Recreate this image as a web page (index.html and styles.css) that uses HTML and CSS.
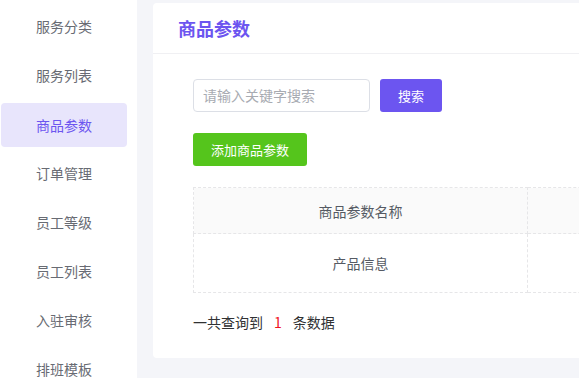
FILE: index.html
```html
<!DOCTYPE html>
<html lang="zh">
<head>
<meta charset="utf-8">
<link rel="stylesheet" href="styles.css">
</head>
<body>
<div class="layout">
  <aside class="sidebar">
    <div class="nav-item">服务分类</div>
    <div class="nav-item">服务列表</div>
    <div class="nav-item active">商品参数</div>
    <div class="nav-item">订单管理</div>
    <div class="nav-item">员工等级</div>
    <div class="nav-item">员工列表</div>
    <div class="nav-item">入驻审核</div>
    <div class="nav-item">排班模板</div>
  </aside>
  <main class="main">
    <section class="card">
      <header class="card-header">商品参数</header>
      <div class="card-body">
        <div class="search-row">
          <div class="search-input">请输入关键字搜索</div>
          <button class="btn btn-primary">搜索</button>
        </div>
        <button class="btn btn-success">添加商品参数</button>
        <table class="table">
          <thead>
            <tr><th class="col-name">商品参数名称</th><th></th></tr>
          </thead>
          <tbody>
            <tr><td>产品信息</td><td></td></tr>
          </tbody>
        </table>
        <div class="summary">一共查询到<span class="count">1</span>条数据</div>
      </div>
    </section>
  </main>
</div>
</body>
</html>
```

FILE: styles.css
```css
* { box-sizing: border-box; }
html, body {
  margin: 0;
  padding: 0;
  width: 579px;
  height: 378px;
  overflow: hidden;
  font-family: "Noto Sans CJK SC", "Noto Sans", sans-serif;
  font-size: 14px;
}
.layout {
  display: flex;
  height: 378px;
}
.sidebar {
  width: 137px;
  flex: none;
  background: #fff;
  padding-top: 4px;
  display: flex;
  flex-direction: column;
  gap: 5px;
}
.nav-item {
  margin-left: 1px;
  width: 126px;
  height: 44px;
  line-height: 44px;
  padding-left: 35px;
  color: #686b73;
  border-radius: 4px;
  flex: none;
}
.nav-item.active {
  margin-top: 1px;
  margin-bottom: -1px;
  background: #e8e5fc;
  color: #6c55f0;
}
.main {
  flex: 1;
  background: #f4f5f9;
  padding: 3px 0 0 16px;
  min-width: 0;
}
.card {
  width: 700px;
  height: 355px;
  background: #fff;
  border-radius: 4px;
}
.card-header {
  height: 51px;
  border-bottom: 1px solid #f0f0f3;
  padding-left: 25px;
  line-height: 50px;
  font-size: 18px;
  font-weight: bold;
  color: #6c55f0;
}
.card-body {
  padding: 25px 0 0 40px;
}
.search-row {
  display: flex;
  gap: 10px;
}
.search-input {
  width: 177px;
  height: 33px;
  border: 1px solid #dcdfe6;
  border-radius: 4px;
  padding-left: 9px;
  line-height: 31px;
  color: #a8abb2;
}
.btn {
  height: 33px;
  border: none;
  border-radius: 3px;
  color: #fff;
  font-family: inherit;
  font-size: 13px;
  padding: 0;
  display: block;
}
.btn-primary {
  width: 62px;
  background: #6c55f0;
}
.btn-success {
  width: 114px;
  margin-top: 21px;
  background: #55c51c;
}
.table {
  margin-top: 21px;
  width: 640px;
  border-collapse: collapse;
  color: #555a63;
}
.table th, .table td {
  border: 1px dashed #e6e6e8;
  text-align: center;
  font-weight: normal;
  padding: 0;
}
.table th {
  height: 46px;
  background: #fafafa;
}
.table td {
  height: 59px;
}
.col-name {
  width: 334px;
}
.summary {
  margin-top: 18px;
  color: #303133;
  line-height: 22px;
}
.count {
  color: #f0141e;
  margin: 0 11px;
}
```
